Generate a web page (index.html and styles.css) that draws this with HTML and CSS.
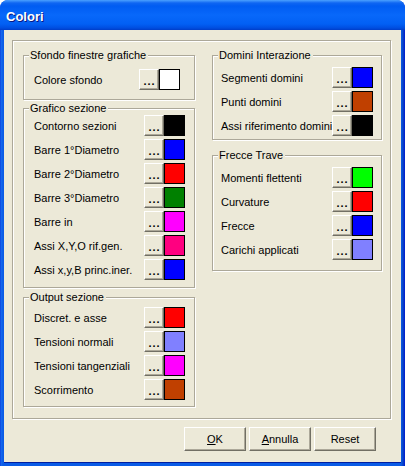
FILE: index.html
```html
<!DOCTYPE html>
<html lang="it">
<head>
  <meta charset="UTF-8" />
  <title>Colori</title>
  <link rel="stylesheet" href="styles.css">
</head>
<body>

  <div class="window">
    <div class="titlebar"><span class="title">Colori</span></div>

    <div class="client">
      <div class="frame">

        <!-- colonna sinistra -->
        <div class="col">
          <div class="group g-sfondo">
            <div class="legend">Sfondo finestre grafiche</div>
            <div class="rows">
              <div class="row"><span class="label">Colore sfondo</span><button class="pick">...</button><span class="swatch sw-white"></span></div>
            </div>
          </div>

          <div class="group g-grafico">
            <div class="legend">Grafico sezione</div>
            <div class="rows">
              <div class="row"><span class="label">Contorno sezioni</span><button class="pick">...</button><span class="swatch sw-black"></span></div>
              <div class="row"><span class="label">Barre 1°Diametro</span><button class="pick">...</button><span class="swatch sw-blue"></span></div>
              <div class="row"><span class="label">Barre 2°Diametro</span><button class="pick">...</button><span class="swatch sw-red"></span></div>
              <div class="row"><span class="label">Barre 3°Diametro</span><button class="pick">...</button><span class="swatch sw-green"></span></div>
              <div class="row"><span class="label">Barre in</span><button class="pick">...</button><span class="swatch sw-magenta"></span></div>
              <div class="row"><span class="label">Assi X,Y,O rif.gen.</span><button class="pick">...</button><span class="swatch sw-pink"></span></div>
              <div class="row"><span class="label">Assi x,y,B princ.iner.</span><button class="pick">...</button><span class="swatch sw-blue"></span></div>
            </div>
          </div>

          <div class="group g-output">
            <div class="legend">Output sezione</div>
            <div class="rows">
              <div class="row"><span class="label">Discret. e asse</span><button class="pick">...</button><span class="swatch sw-red"></span></div>
              <div class="row"><span class="label">Tensioni normali</span><button class="pick">...</button><span class="swatch sw-lilac"></span></div>
              <div class="row"><span class="label">Tensioni tangenziali</span><button class="pick">...</button><span class="swatch sw-magenta"></span></div>
              <div class="row"><span class="label">Scorrimento</span><button class="pick">...</button><span class="swatch sw-brown"></span></div>
            </div>
          </div>
        </div>

        <!-- colonna destra -->
        <div class="col">
          <div class="group g-domini">
            <div class="legend">Domini Interazione</div>
            <div class="rows">
              <div class="row"><span class="label">Segmenti domini</span><button class="pick">...</button><span class="swatch sw-blue"></span></div>
              <div class="row"><span class="label">Punti domini</span><button class="pick">...</button><span class="swatch sw-brown"></span></div>
              <div class="row"><span class="label">Assi riferimento domini</span><button class="pick">...</button><span class="swatch sw-black"></span></div>
            </div>
          </div>

          <div class="group g-frecce">
            <div class="legend">Frecce Trave</div>
            <div class="rows">
              <div class="row"><span class="label">Momenti flettenti</span><button class="pick">...</button><span class="swatch sw-lime"></span></div>
              <div class="row"><span class="label">Curvature</span><button class="pick">...</button><span class="swatch sw-red"></span></div>
              <div class="row"><span class="label">Frecce</span><button class="pick">...</button><span class="swatch sw-blue"></span></div>
              <div class="row"><span class="label">Carichi applicati</span><button class="pick">...</button><span class="swatch sw-lilac"></span></div>
            </div>
          </div>
        </div>

      </div>

      <div class="buttons">
        <button class="btn"><u>O</u>K</button>
        <button class="btn"><u>A</u>nnulla</button>
        <button class="btn">Reset</button>
      </div>
    </div>
  </div>

</body>
</html>
```

FILE: styles.css
```css
/* Finestra stile XP */
* {
  margin: 0;
  padding: 0;
  box-sizing: border-box;
}
body {
  font-family: "Liberation Sans", Arial, sans-serif;
  font-size: 11px;
  background: #fff;
}

.window {
  width: 405px;
  height: 466px;
  display: flex;
  flex-direction: column;
  background: linear-gradient(to right, #0831d9 0, #166aee 1px, #0a5be6 3px, #0a5be6 401px, #0843c6 403px, #0019cf 405px);
  border-radius: 8px 8px 0 0;
  overflow: hidden;
}

.titlebar {
  height: 30px;
  flex-shrink: 0;
  display: flex;
  align-items: center;
  padding: 2px 0 0 6px;
  background: linear-gradient(#4aa0ff 0, #0f66f2 3px, #005cf2 6px, #0868fa 15px, #0260f4 24px, #004ee0 28px, #003dc8 30px);
}
.title {
  font-family: "Liberation Sans", Arial, sans-serif;
  font-size: 13px;
  font-weight: bold;
  color: #fff;
  text-shadow: 1px 1px 0 #0a1883;
}

.client {
  flex: 1;
  margin: 0 4px 4px;
  background: #ece9d8;
  padding: 10px 10px 0 8px;
  box-shadow: 0 1px 0 #001ea0;
}

/* cornice esterna */
.frame {
  height: 379px;
  border: 1px solid #aca899;
  box-shadow: inset 1px 1px #fff, 1px 1px #fff;
  display: grid;
  grid-template-columns: 172px 170px;
  column-gap: 17px;
  align-items: start;
  padding: 14px 0 0 10px;
}

.col {
  display: flex;
  flex-direction: column;
}

/* gruppi (groupbox) */
.group {
  border: 1px solid #aca899;
  box-shadow: inset 1px 1px #fff, 1px 1px #fff;
}
.legend {
  width: fit-content;
  margin: -7px 0 0 5px;
  padding: 0 2px 0 1px;
  line-height: 13px;
  background: #ece9d8;
  color: #000;
}
.rows {
  display: flex;
  flex-direction: column;
  gap: 3px;
  padding: 0 9px 0 10px;
}

.g-sfondo .rows { padding: 7px 14px 9px 10px; }
.g-grafico { margin-top: 8px; }
.g-grafico .rows { padding-bottom: 7px; }
.g-output { margin-top: 9px; }
.g-output .rows { padding: 3px 9px 6px 10px; }
.g-domini .rows { padding: 5px 8px 3px 8px; }
.g-frecce { margin-top: 15px; }
.g-frecce .rows { padding: 5px 8px 10px 8px; }

.row {
  display: flex;
  align-items: center;
  height: 21px;
}
.label {
  flex: 1;
  white-space: nowrap;
  color: #000;
}

/* pulsante "..." */
.pick {
  width: 20px;
  height: 21px;
  font-family: inherit;
  font-size: 11px;
  font-weight: bold;
  letter-spacing: 1px;
  padding: 3px 0 0 1px;
  background: #ece9d8;
  color: #000;
  border: 1px solid;
  border-color: #fff #716f64 #716f64 #fff;
  box-shadow: inset -1px -1px #aca899;
}

.swatch {
  width: 21px;
  height: 21px;
  border: 1px solid #000;
}
.sw-white { background: #fff; }
.sw-black { background: #000; }
.sw-blue { background: #0000ff; }
.sw-red { background: #ff0000; }
.sw-green { background: #008000; }
.sw-magenta { background: #ff00ff; }
.sw-pink { background: #ff0080; }
.sw-brown { background: #c04000; }
.sw-lilac { background: #8080ff; }
.sw-lime { background: #00ff00; }

/* pulsanti in basso */
.buttons {
  display: flex;
  justify-content: flex-end;
  gap: 3px;
  margin-top: 8px;
  padding-right: 15px;
}
.btn {
  width: 62px;
  height: 24px;
  font-family: inherit;
  font-size: 11px;
  background: #ece9d8;
  color: #000;
  border: 1px solid;
  border-color: #fff #716f64 #716f64 #fff;
  box-shadow: inset -1px -1px #aca899;
}
```
